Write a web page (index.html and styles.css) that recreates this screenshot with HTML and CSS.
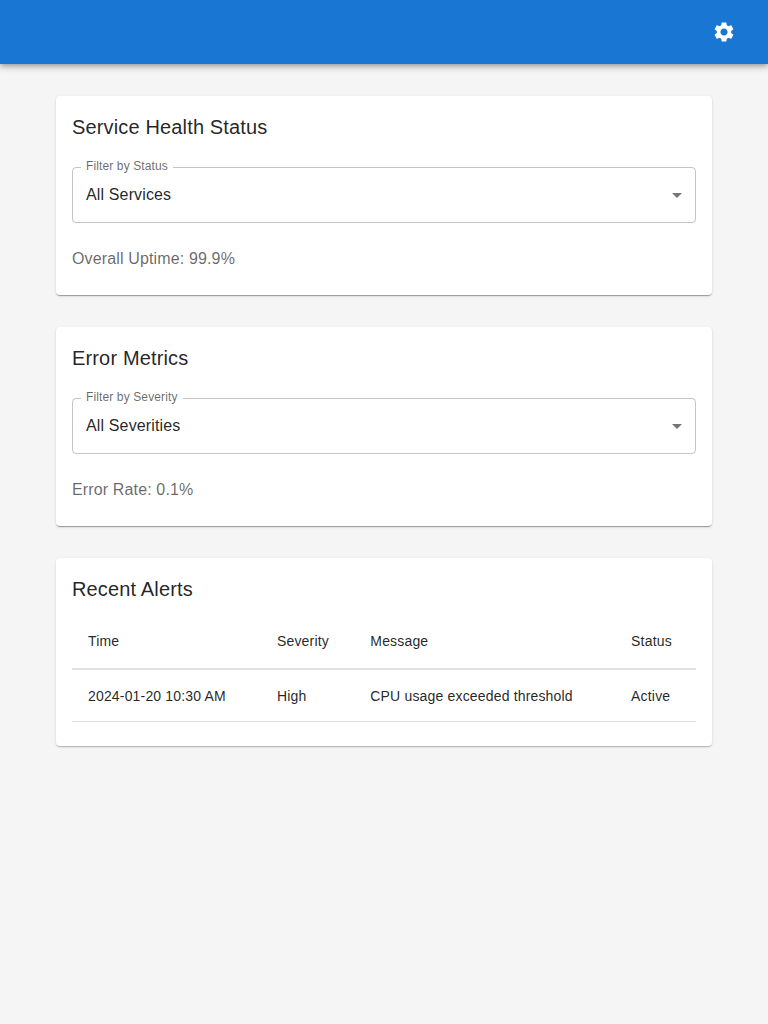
FILE: index.html
```html
<!DOCTYPE html>
<html lang="en">
<head>
<meta charset="utf-8">
<title>Service Health</title>
<link rel="stylesheet" href="styles.css">
</head>
<body>
<header class="app-bar">
  <button class="icon-button" aria-label="Settings">
    <svg viewBox="0 0 24 24" width="24" height="24" fill="currentColor"><path d="M19.14 12.94c.04-.3.06-.61.06-.94 0-.32-.02-.64-.07-.94l2.03-1.58c.18-.14.23-.41.12-.61l-1.92-3.32c-.12-.22-.37-.29-.59-.22l-2.39.96c-.5-.38-1.03-.7-1.62-.94l-.36-2.54c-.04-.24-.24-.41-.48-.41h-3.84c-.24 0-.43.17-.47.41l-.36 2.54c-.59.24-1.13.57-1.62.94l-2.39-.96c-.22-.08-.47 0-.59.22L2.74 8.87c-.12.21-.08.47.12.61l2.03 1.58c-.05.3-.09.63-.09.94s.02.64.07.94l-2.03 1.58c-.18.14-.23.41-.12.61l1.92 3.32c.12.22.37.29.59.22l2.39-.96c.5.38 1.03.7 1.62.94l.36 2.54c.05.24.24.41.48.41h3.84c.24 0 .44-.17.47-.41l.36-2.54c.59-.24 1.13-.56 1.62-.94l2.39.96c.22.08.47 0 .59-.22l1.92-3.32c.12-.22.07-.47-.12-.61zM12 15.6c-1.98 0-3.6-1.62-3.6-3.6s1.62-3.6 3.6-3.6 3.6 1.62 3.6 3.6-1.62 3.6-3.6 3.6"/></svg>
  </button>
</header>
<main class="container">
  <section class="card">
    <h2 class="card-title">Service Health Status</h2>
    <div class="select">
      <span class="select-label">Filter by Status</span>
      <span class="select-value">All Services</span>
      <svg class="select-arrow" viewBox="0 0 24 24" width="24" height="24"><path d="M7 10l5 5 5-5z"/></svg>
    </div>
    <p class="metric">Overall Uptime: 99.9%</p>
  </section>
  <section class="card">
    <h2 class="card-title">Error Metrics</h2>
    <div class="select">
      <span class="select-label">Filter by Severity</span>
      <span class="select-value">All Severities</span>
      <svg class="select-arrow" viewBox="0 0 24 24" width="24" height="24"><path d="M7 10l5 5 5-5z"/></svg>
    </div>
    <p class="metric">Error Rate: 0.1%</p>
  </section>
  <section class="card card-alerts">
    <h2 class="card-title">Recent Alerts</h2>
    <table class="table">
      <thead><tr><th>Time</th><th>Severity</th><th>Message</th><th>Status</th></tr></thead>
      <tbody><tr><td>2024-01-20 10:30 AM</td><td>High</td><td>CPU usage exceeded threshold</td><td>Active</td></tr></tbody>
    </table>
  </section>
</main>
</body>
</html>
```
FILE: styles.css
```css
* { box-sizing: border-box; }
body {
  margin: 0;
  min-height: 100vh;
  background: #f5f5f5;
  color: rgba(0, 0, 0, 0.87);
  font-family: "Liberation Sans", Arial, sans-serif;
  font-size: 16px;
  line-height: 1.5;
  letter-spacing: 0.14px;
}
.app-bar {
  display: flex;
  align-items: center;
  justify-content: flex-end;
  height: 64px;
  padding: 0 24px;
  background: #1976d2;
  color: #fff;
  box-shadow: 0 2px 4px -1px rgba(0,0,0,.2), 0 4px 5px rgba(0,0,0,.14), 0 1px 10px rgba(0,0,0,.12);
}
.icon-button {
  display: flex;
  padding: 8px;
  border: 0;
  background: none;
  color: inherit;
}
.container {
  display: flex;
  flex-direction: column;
  gap: 32px;
  padding: 32px 56px;
}
.card {
  padding: 16px 16px 24px;
  border-radius: 4px;
  background: #fff;
  box-shadow: 0 2px 1px -1px rgba(0,0,0,.2), 0 1px 1px rgba(0,0,0,.14), 0 1px 3px rgba(0,0,0,.12);
}
.card-alerts {
  box-shadow: 0 2px 1px -1px rgba(0,0,0,.1), 0 1px 1px rgba(0,0,0,.1), 0 1px 3px rgba(0,0,0,.12);
}
.card-title {
  margin: 0;
  font-size: 20px;
  font-weight: 400;
  line-height: 30px;
  letter-spacing: 0.15px;
}
.select {
  position: relative;
  display: flex;
  align-items: center;
  justify-content: space-between;
  height: 56px;
  margin: 25px 0 24px;
  padding: 0 6px 0 13px;
  border: 1px solid rgba(0, 0, 0, 0.23);
  border-radius: 4px;
}
.select-label {
  position: absolute;
  top: -10px;
  left: 8px;
  padding: 0 5px;
  background: #fff;
  color: rgba(0, 0, 0, 0.6);
  font-size: 12px;
  line-height: 17px;
  letter-spacing: 0.12px;
}
.select-arrow { fill: rgba(0, 0, 0, 0.54); }
.metric {
  margin: 0;
  color: rgba(0, 0, 0, 0.6);
}
.table {
  width: 100%;
  margin-top: 8px;
  border-collapse: separate;
  border-spacing: 0;
  font-size: 14px;
  letter-spacing: 0.17px;
}
.table th, .table td {
  padding: 16px;
  border-bottom: 1px solid #e0e0e0;
  font-weight: 400;
  line-height: 20px;
  text-align: left;
}
.table th {
  padding: 17px 16px 15px;
  border-bottom-width: 2px;
  line-height: 24px;
}
.table td { padding-bottom: 15px; }
```
